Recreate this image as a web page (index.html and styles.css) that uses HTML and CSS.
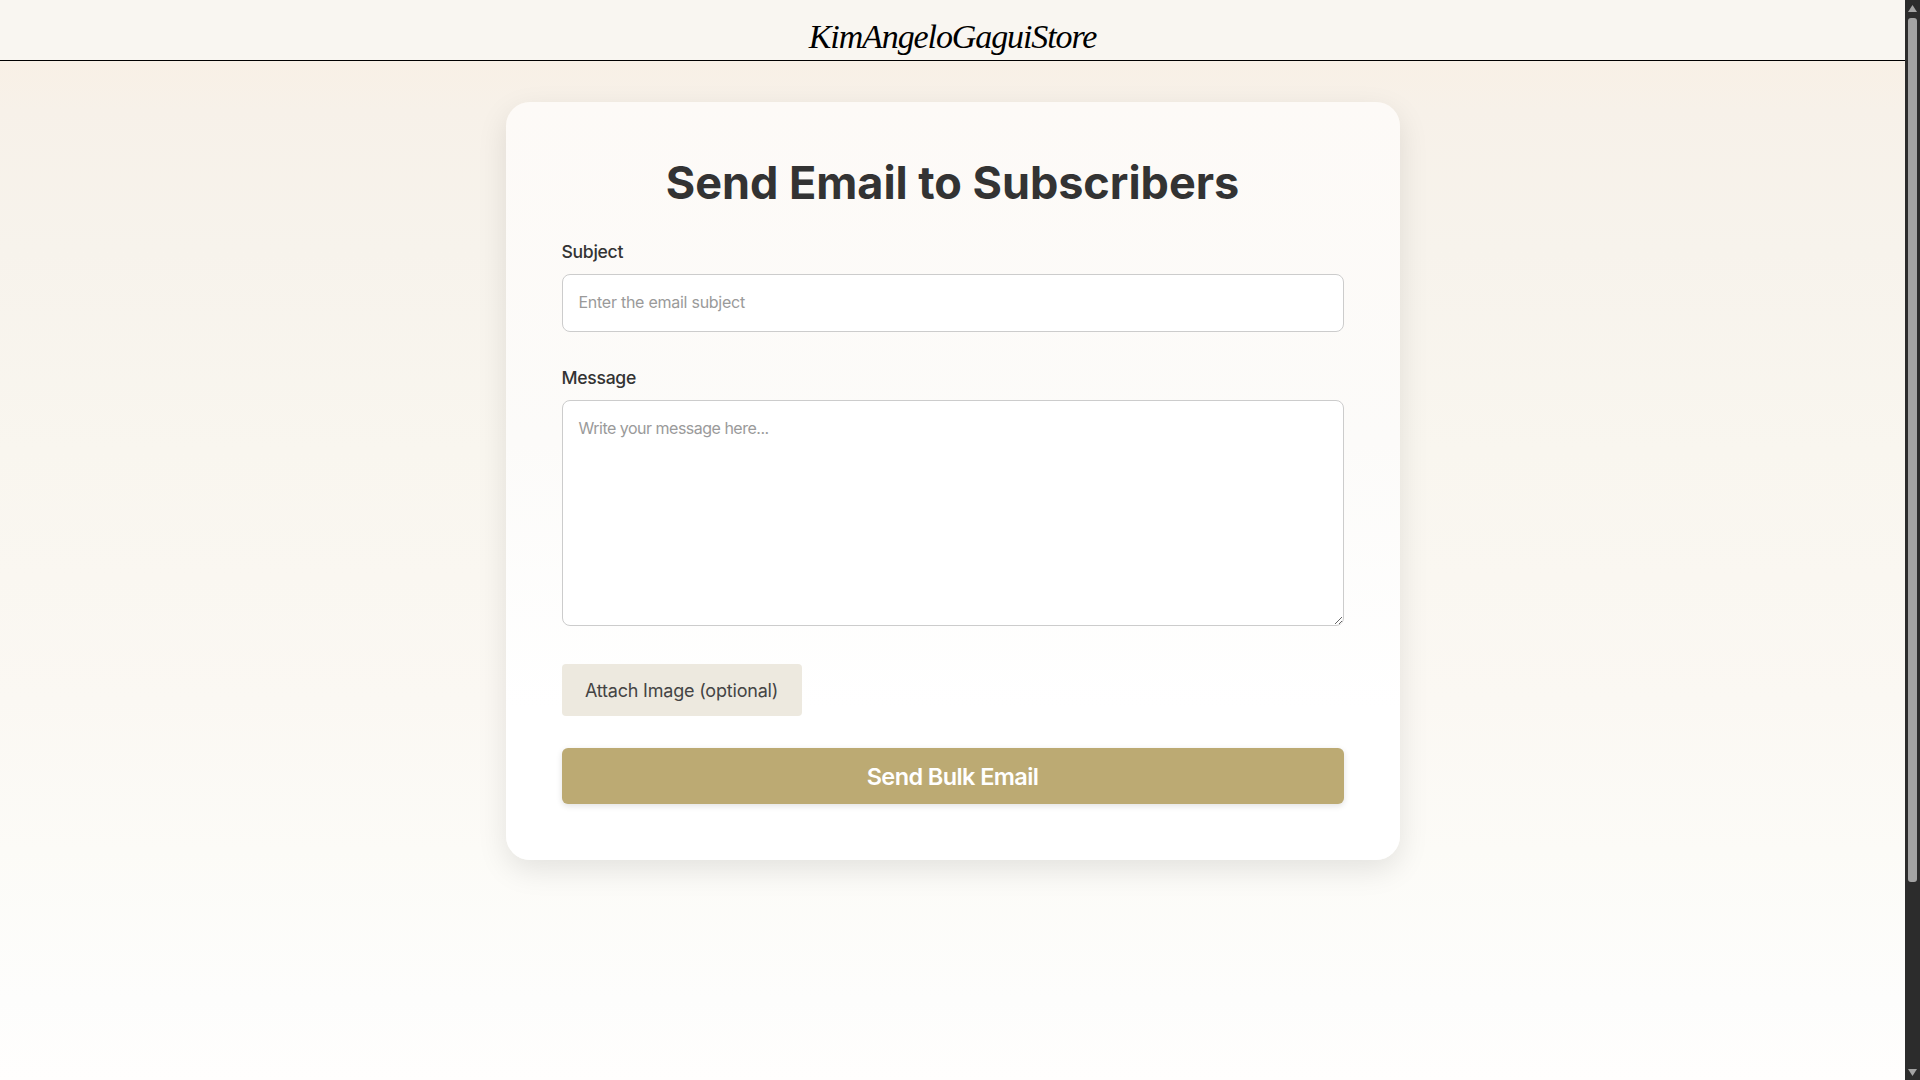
FILE: index.html
```html
<!DOCTYPE html>
<html lang="en">
<head>
<meta charset="utf-8">
<title>Send Email to Subscribers</title>
<link rel="stylesheet" href="styles.css">
</head>
<body>
<div class="window">
  <div class="page">
    <header class="topbar"><span class="brand">KimAngeloGaguiStore</span></header>
    <main class="content">
      <form class="card">
        <h1 class="title">Send Email to Subscribers</h1>
        <label class="label" for="subject">Subject</label>
        <input class="field field-input" id="subject" type="text" placeholder="Enter the email subject">
        <label class="label" for="message">Message</label>
        <textarea class="field field-area" id="message" placeholder="Write your message here..."></textarea>
        <button class="attach" type="button">Attach Image (optional)</button>
        <button class="send" type="button">Send Bulk Email</button>
      </form>
    </main>
  </div>
  <div class="scrollbar">
    <svg class="arrow" viewBox="0 0 15 17" aria-hidden="true"><path d="M7.5 5 L12 12 L3 12 Z"/></svg>
    <div class="track"><div class="thumb"></div></div>
    <svg class="arrow" viewBox="0 0 15 17" aria-hidden="true"><path d="M3 6 L12 6 L7.5 13 Z"/></svg>
  </div>
</div>
</body>
</html>
```
FILE: styles.css
```css
* { box-sizing: border-box; }
html, body { margin: 0; height: 100%; overflow: hidden; }
body { font-family: "Inter", "Open Sans", sans-serif; color: #333; }
.window { display: flex; height: 1080px; }
.page {
  flex: 1;
  min-width: 0;
  background: linear-gradient(to bottom,
    #f8f0e6 61px, #f7f1e9 110px, #f7f3ec 250px,
    #f9f6ef 450px, #fbf8f3 700px, #fcfbf7 850px, #fdfdfc 1000px, #fffefd 1080px);
}
.topbar {
  height: 61px;
  background: #f9f6f1;
  border-bottom: 1px solid #000;
  display: flex;
  justify-content: center;
  align-items: center;
}
.brand {
  font-family: "Liberation Serif", serif;
  font-style: italic;
  font-size: 34px;
  color: #000;
  padding-top: 14px;
  letter-spacing: -1.1px;
}
.content { display: flex; justify-content: center; padding-top: 41px; }
.card {
  width: 894px;
  height: 758px;
  padding: 56px;
  background: linear-gradient(to bottom, #fdfaf7, #fcfbf9 45%, #ffffff 80%);
  border-radius: 24px;
  box-shadow: 0 10px 30px rgba(0, 0, 0, 0.1);
  display: flex;
  flex-direction: column;
  align-items: flex-start;
}
.title {
  margin: 0 0 34px;
  width: 100%;
  text-align: center;
  font-size: 45px;
  line-height: 50px;
  font-weight: 700;
  letter-spacing: -0.04px;
  color: #333;
}
.label {
  font-size: 17.6px;
  line-height: 20px;
  font-weight: 500;
  letter-spacing: -0.3px;
  margin-bottom: 12px;
  color: #333;
}
.field {
  display: block;
  width: 100%;
  padding: 16px;
  border: 1px solid #ccc;
  border-radius: 8px;
  background: #fff;
  font-family: inherit;
  font-size: 16px;
  color: #333;
}
.field::placeholder { color: #9a9a9a; opacity: 1; }
.field-input { height: 58px; margin-bottom: 36px; padding: 15px 16px 17px; letter-spacing: -0.26px; }
.field-area { height: 226px; margin-bottom: 38px; resize: vertical; padding-top: 17px; letter-spacing: -0.5px; }
.attach {
  height: 52px;
  width: 240px;
  border: 0;
  border-radius: 4px;
  background: #ede9df;
  font-family: inherit;
  font-size: 18px;
  letter-spacing: -0.2px;
  color: #444;
  margin-bottom: 32px;
  padding: 0;
}
.send {
  width: 100%;
  height: 56px;
  border: 0;
  border-radius: 6px;
  background: #bcaa73;
  color: #fff;
  font-family: inherit;
  font-size: 23.5px;
  letter-spacing: -0.6px;
  font-weight: 600;
  padding: 0;
  box-shadow: 0 2px 6px rgba(0, 0, 0, 0.12);
}
.scrollbar {
  width: 15px;
  background: #2c2c2c;
  display: flex;
  flex-direction: column;
}
.arrow { display: block; width: 15px; height: 17px; fill: #a3a3a3; flex: none; }
.track { flex: 1; }
.thumb { width: 9px; height: 864px; margin: 1px 3px 0; background: #a3a3a3; border-radius: 3px; }
```
